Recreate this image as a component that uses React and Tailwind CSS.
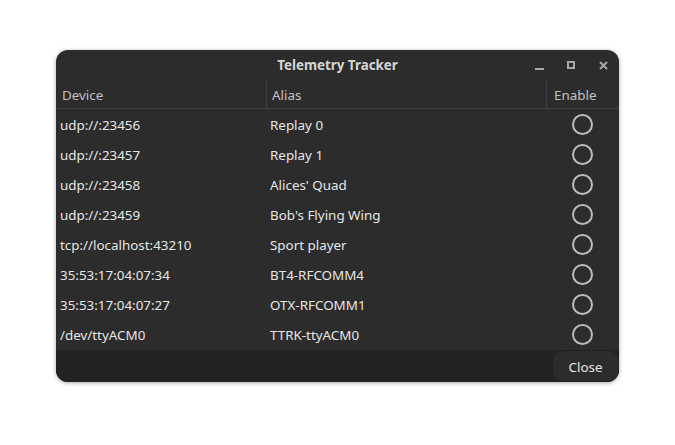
import React from "react";

const rows = [
  ["udp://:23456", "Replay 0"],
  ["udp://:23457", "Replay 1"],
  ["udp://:23458", "Alices' Quad"],
  ["udp://:23459", "Bob's Flying Wing"],
  ["tcp://localhost:43210", "Sport player"],
  ["35:53:17:04:07:34", "BT4-RFCOMM4"],
  ["35:53:17:04:07:27", "OTX-RFCOMM1"],
  ["/dev/ttyACM0", "TTRK-ttyACM0"],
];

export default function App() {
  return (
    <div
      className="w-[675px] h-[445px] bg-white relative"
      style={{ fontFamily: '"Noto Sans", "Open Sans", sans-serif' }}
    >
      <div className="absolute left-[56px] top-[50px] w-[563px] h-[332px] rounded-[12px] bg-[#2c2c2c] overflow-hidden flex flex-col shadow-[0_1px_4px_rgba(0,0,0,0.35)]">
        {/* title bar */}
        <div className="h-[30px] flex items-center relative shrink-0">
          <div className="absolute inset-0 flex items-center justify-center text-[13.4px] font-bold text-[#d6d6d6] pt-[1px]">
            Telemetry Tracker
          </div>
          <div className="ml-auto flex items-center h-full relative pr-[1px]">
            <div className="w-[32px] h-full flex items-center justify-center pl-[2px]">
              <div className="w-[9px] h-[2px] bg-[#a8a8a8] mt-[7px]" />
            </div>
            <div className="w-[32px] h-full flex items-center justify-center pl-[2px]">
              <div className="w-[8px] h-[8px] border-2 border-[#a8a8a8]" />
            </div>
            <div className="w-[32px] h-full flex items-center justify-center pl-[2px]">
              <svg width="9" height="9" viewBox="0 0 9 9">
                <path d="M1 1L8 8M8 1L1 8" stroke="#a8a8a8" strokeWidth="2" />
              </svg>
            </div>
          </div>
        </div>
        {/* header */}
        <div className="h-[29px] flex border-b border-[#3f3f3f] text-[13.4px] text-[#c2c2c2] shrink-0">
          <div className="w-[210px] pl-[6px] flex items-center pt-[2px]">Device</div>
          <div className="w-[280px] pl-[5px] flex items-center border-l border-[#3f3f3f] pt-[2px]">Alias</div>
          <div className="flex-1 pl-[7px] flex items-center border-l border-[#3f3f3f] pt-[2px]">Enable</div>
        </div>
        {/* rows */}
        <div className="flex flex-col">
          {rows.map(([d, a]) => (
            <div key={d} className="h-[30px] flex items-center text-[13.4px] text-[#e6e6e6]">
              <div className="w-[210px] pl-[4px] pt-[2px]">{d}</div>
              <div className="w-[280px] pl-[4px] pt-[2px]">{a}</div>
              <div className="flex-1 flex justify-center">
                <div className="w-[21px] h-[21px] rounded-full border-2 border-[#bcbcbc]" />
              </div>
            </div>
          ))}
        </div>
        {/* footer */}
        <div className="mt-auto h-[32px] bg-[#222222] flex justify-end items-stretch shrink-0">
          <div className="w-[65px] mt-[1px] mr-[1px] mb-[1px] rounded-[10px] bg-[#2c2c2c] flex items-center justify-center text-[13.4px] text-[#e6e6e6] pt-[2px]">
            Close
          </div>
        </div>
      </div>
    </div>
  );
}
